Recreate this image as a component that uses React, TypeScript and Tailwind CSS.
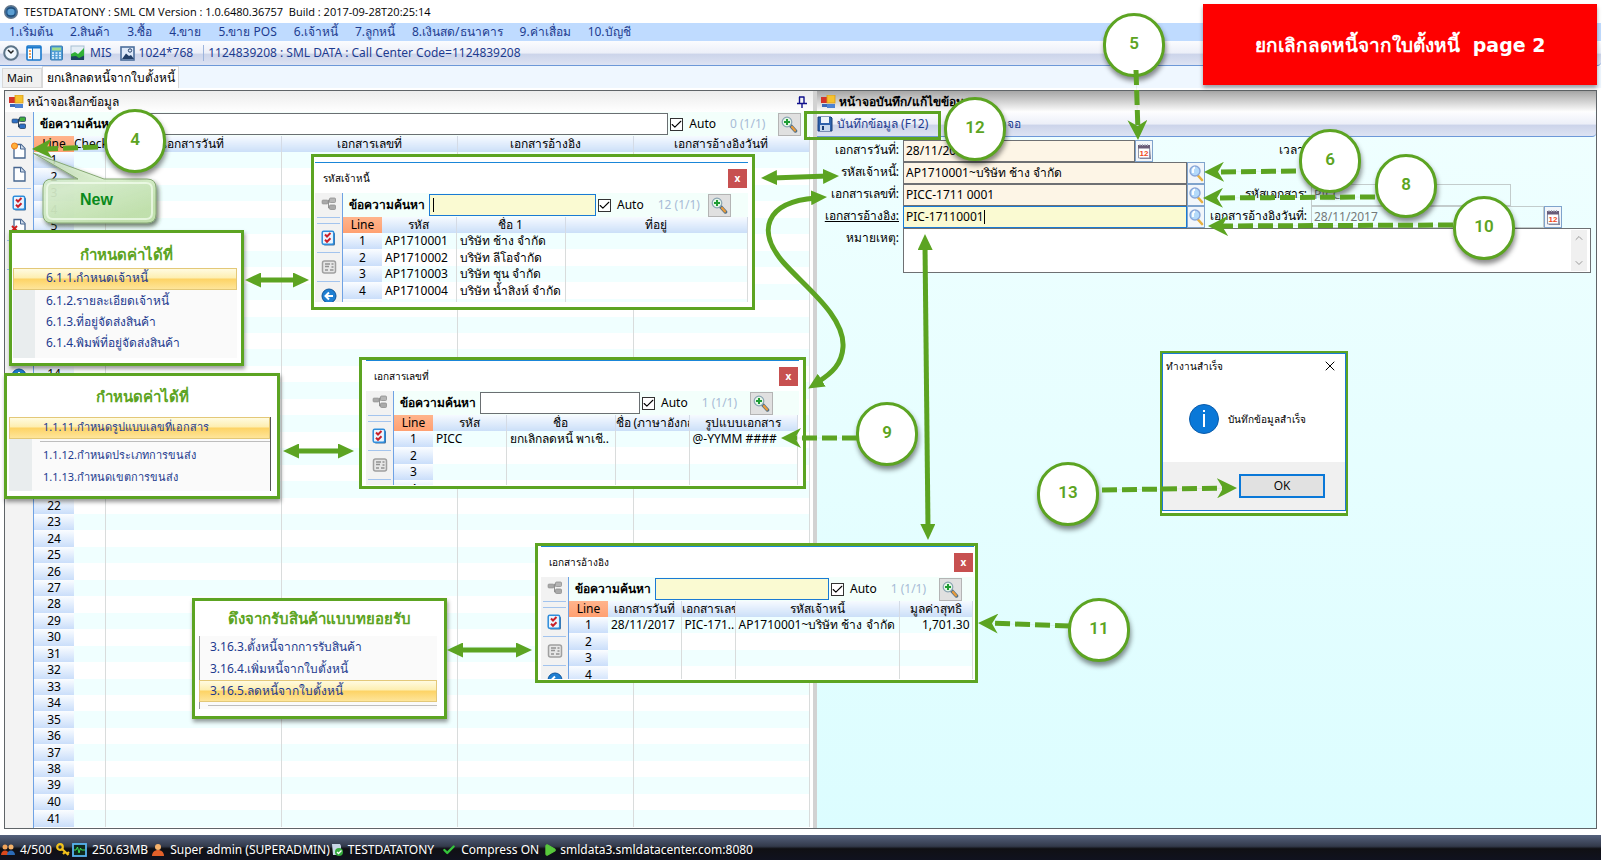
import type { ReactNode } from 'react'
import { Check, ChevronDown, ChevronUp, Play, X } from 'lucide-react'

const MENUS = ['1.เริ่มต้น', '2.สินค้า', '3.ซื้อ', '4.ขาย', '5.ขาย POS', '6.เจ้าหนี้', '7.ลูกหนี้', '8.เงินสด/ธนาคาร', '9.ค่าเสื่อม', '10.บัญชี']

type Column = { label: string; width: string; align?: string }

const MAIN_COLUMNS: Column[] = [
  { label: 'Check', width: 'w-[31px]' },
  { label: 'เอกสารวันที่', width: 'w-[176px]' },
  { label: 'เอกสารเลขที่', width: 'w-[176px]' },
  { label: 'เอกสารอ้างอิง', width: 'w-[176px]' },
  { label: 'เอกสารอ้างอิงวันที่', width: 'w-[176px]' },
]

/* ─── Icons ─── */

function TreeIcon({ muted = false }: { muted?: boolean }) {
  const a = muted ? '#a9a9a9' : '#2f6fc4'
  const b = muted ? '#b5b5b5' : '#3fae3a'
  const edge = muted ? '#8f8f8f' : '#27405f'
  return (
    <svg width="16" height="14" viewBox="0 0 16 14" aria-hidden>
      <path d="M6 5h3M7.500 5v6H10M7.500 5V3H10" stroke={edge} fill="none" />
      <rect x="1" y="3" width="6" height="4" rx="1" fill={a} stroke={edge} strokeWidth=".6" />
      <rect x="8.500" y="1" width="6" height="4.500" rx="1" fill={b} stroke={edge} strokeWidth=".8" />
      <rect x="8.500" y="8" width="6" height="4.500" rx="1" fill={a} stroke={edge} strokeWidth=".8" />
    </svg>
  )
}

function PageIcon({ mark }: { mark?: 'new' | 'delete' }) {
  return (
    <svg width="16" height="18" viewBox="0 0 16 18" aria-hidden>
      <path d="M3 2.500h7l4 4v9.500H3z" fill="#fdfeff" stroke="#46658f" strokeWidth="1.300" />
      <path d="M9.500 2.500v4.500H14" fill="#cfdcec" stroke="#46658f" />
      {mark === 'new' && <circle cx="3.500" cy="4" r="3" fill="#ffb03a" stroke="#f07a1c" />}
      {mark === 'delete' && <path d="M1 9l5 5M6 9l-5 5" stroke="#d02020" strokeWidth="2" />}
    </svg>
  )
}

function ChecklistIcon() {
  return (
    <svg width="15" height="16" viewBox="0 0 15 16" aria-hidden>
      <rect x="2.500" y="2.500" width="11.500" height="13" rx="1.500" fill="#3d6c9c" />
      <rect x="1.200" y="1.200" width="11.500" height="13" rx="1.500" fill="#eaf5ff" stroke="#2f8ddb" strokeWidth="1.500" />
      <path d="M4 4.500l2 2 3.500-3.500M4 9.800l2 2 3.500-3.500" stroke="#c9202a" strokeWidth="2" fill="none" />
    </svg>
  )
}

function CardIcon() {
  return (
    <svg width="16" height="16" viewBox="0 0 16 16" aria-hidden>
      <rect x="1.500" y="2" width="13" height="12" rx="2" fill="#e6e6e6" stroke="#a0a0a0" strokeWidth="1.500" />
      <path d="M4 5h5M4 7.500h4M10.500 5h2M10.500 8h2M4 11h3M9 11h3.500" stroke="#929292" strokeWidth="1.600" />
    </svg>
  )
}

function RoundIcon({ d }: { d: string }) {
  return (
    <svg width="16" height="16" viewBox="0 0 16 16" aria-hidden>
      <circle cx="8" cy="8" r="7" fill="#1f7fd2" stroke="#0f559c" />
      <path d={d} stroke="#fff" strokeWidth="2" fill="none" />
    </svg>
  )
}

function ZoomPlusIcon() {
  return (
    <svg width="17" height="17" viewBox="0 0 17 17" aria-hidden>
      <path d="M9 9l5.500 6" stroke="#557084" strokeWidth="3.500" strokeLinecap="round" />
      <path d="M11 11l3 3.500" stroke="#e89a3a" strokeWidth="2.200" strokeLinecap="round" />
      <circle cx="6" cy="6" r="4.800" fill="#e4f7e6" stroke="#8aa4b2" strokeWidth="1.200" />
      <path d="M3 6h6M6 3v6" stroke="#1f9c34" strokeWidth="2" />
    </svg>
  )
}

function LensIcon() {
  return (
    <svg width="16" height="18" viewBox="0 0 16 18" aria-hidden>
      <path d="M9.500 11l4.500 5" stroke="#e6b040" strokeWidth="2.600" strokeLinecap="round" />
      <circle cx="7" cy="7" r="5" fill="#b4dafa" stroke="#8aa6d8" strokeWidth="1.400" />
      <path d="M5 9V5.500a2.500 2.500 0 0 1 2-2" stroke="#fff" strokeWidth="1.800" fill="none" />
    </svg>
  )
}

function CalendarIcon() {
  return (
    <svg width="15" height="17" viewBox="0 0 15 17" aria-hidden>
      <path d="M2 3l11 1 1 12H3z" fill="#7a7f98" />
      <path d="M1.500 3.500h11v11.500h-11z" fill="#fff" stroke="#8f93a8" />
      <path d="M1 2h12v3.500H1z" fill="#6a5c78" />
      <path d="M3 1v2M5.500 1v2M8 1v2M10.500 1v2" stroke="#a5a8b8" />
      <text x="7" y="12.500" fontSize="8" fontWeight="700" textAnchor="middle" fill="#f04a1c" fontFamily="Liberation Sans, sans-serif">12</text>
    </svg>
  )
}

function FormIcon() {
  return (
    <svg width="15" height="14" viewBox="0 0 15 14" aria-hidden>
      <rect x="0" y="2" width="6" height="6" fill="#d3342b" />
      <rect x="1" y="9" width="5" height="3" fill="#3b69b8" />
      <rect x="6" y="0" width="8" height="8" fill="#f5c22f" stroke="#d89a17" strokeWidth=".8" />
      <rect x="6" y="9" width="8" height="4" fill="#4d82d4" />
    </svg>
  )
}

function SaveIcon() {
  return (
    <svg width="16" height="16" viewBox="0 0 16 16" aria-hidden>
      <path d="M1 1h13l1 1v13H1z" fill="#2f62ac" stroke="#1b3f78" />
      <rect x="4" y="1" width="8" height="6" fill="#eef4fb" />
      <rect x="3" y="9" width="10" height="6" fill="#c6d8ee" />
      <rect x="5" y="10" width="2" height="4" fill="#1b3f78" />
    </svg>
  )
}

function AppIcon() {
  return (
    <svg width="14" height="14" viewBox="0 0 14 14" aria-hidden>
      <circle cx="7" cy="7" r="6.300" fill="#2c6296" stroke="#64788c" strokeWidth="1.400" />
      <circle cx="7" cy="7" r="3.500" fill="#5c9fd2" />
      <path d="M3 4.500c2-2 6-2 8 0M3 9.500c2 2 6 2 8 0" stroke="#1d466e" fill="none" />
    </svg>
  )
}

function ClockIcon() {
  return (
    <svg width="16" height="16" viewBox="0 0 16 16" aria-hidden>
      <circle cx="8" cy="8" r="6.800" fill="#eff6fd" stroke="#5c7488" strokeWidth="2" />
      <path d="M5 5l3 3 2.500-2.500" stroke="#222" strokeWidth="1.500" fill="none" />
    </svg>
  )
}

function PanelIcon() {
  return (
    <svg width="16" height="16" viewBox="0 0 16 16" aria-hidden>
      <rect x="1" y="1" width="14" height="14" rx="1" fill="#e6f2fc" stroke="#1a78cc" strokeWidth="1.600" />
      <path d="M1 2.500h14" stroke="#1a78cc" strokeWidth="2" />
      <path d="M2 4h4v10H2z" fill="#fff" />
      <path d="M6.500 3v12" stroke="#1a78cc" />
      <path d="M3 6h2M3 9h2M3 12h2" stroke="#f08828" strokeWidth="1.700" />
    </svg>
  )
}

function CalcIcon() {
  return (
    <svg width="15" height="16" viewBox="0 0 15 16" aria-hidden>
      <rect x="1.500" y="1" width="12" height="14" rx="1" fill="#4f9cd6" stroke="#3a7db4" />
      <rect x="3" y="2.500" width="9" height="3" fill="#9fdb8d" />
      <path d="M3 8h2M6.500 8h2M10 8h2M3 10.500h2M6.500 10.500h2M10 10.500h2M3 13h2M6.500 13h2M10 13h2" stroke="#e9f5ff" strokeWidth="1.500" />
    </svg>
  )
}

function ChartIcon() {
  return (
    <svg width="16" height="16" viewBox="0 0 16 16" aria-hidden>
      <rect x="1" y="1" width="13" height="13" fill="#e4eef6" stroke="#a7bfd2" />
      <path d="M1 9l4-2 3 2 6-6v10H1z" fill="#2fb036" />
      <path d="M1 11.500l5-.5 3 2 5-2.500V15H1z" fill="#1d4460" />
    </svg>
  )
}

function PictureIcon() {
  return (
    <svg width="15" height="15" viewBox="0 0 15 15" aria-hidden>
      <rect x="1" y="1" width="13" height="13" fill="#dfeafa" stroke="#4c6e9c" strokeWidth="1.600" />
      <path d="M2 13l4-5.500 3 2.500 2-1 3 4z" fill="#233f68" />
      <circle cx="10" cy="4.500" r="1.700" fill="none" stroke="#233f68" />
    </svg>
  )
}

function PersonIcon({ twin = false }: { twin?: boolean }) {
  return (
    <svg width="14" height="14" viewBox="0 0 14 14" aria-hidden>
      {twin && (
        <>
          <circle cx="4" cy="4" r="2.500" fill="#f2a35a" />
          <path d="M0 12c0-6 8-6 8 0z" fill="#d8481c" />
        </>
      )}
      <circle cx={twin ? 10 : 7} cy="4" r={twin ? 2.5 : 3} fill="#f5b26b" />
      <path d={twin ? 'M6 12c0-6 8-6 8 0z' : 'M1 13c0-8 12-8 12 0z'} fill={twin ? '#2c6cb8' : '#e2602a'} />
    </svg>
  )
}

function KeyIcon() {
  return (
    <svg width="14" height="14" viewBox="0 0 14 14" aria-hidden>
      <circle cx="4" cy="4" r="2.800" fill="none" stroke="#f2c21c" strokeWidth="2.200" />
      <path d="M6 6l6.500 6M9 9l-2 2M11 11l2-2" stroke="#f2c21c" strokeWidth="2.200" />
    </svg>
  )
}

function MonitorIcon() {
  return (
    <svg width="15" height="14" viewBox="0 0 15 14" aria-hidden>
      <rect x="1" y="1" width="13" height="12" fill="#10291c" stroke="#58b4f0" strokeWidth="1.800" />
      <path d="M2 7h2l1.500-3 1.500 6 1.500-5 1 2h3.500" stroke="#3be05a" fill="none" />
    </svg>
  )
}

function ServerIcon() {
  return (
    <svg width="13" height="14" viewBox="0 0 13 14" aria-hidden>
      <path d="M1 1h8l1 2v9H2z" fill="#c8d6e6" />
      <circle cx="8" cy="9" r="4" fill="#35a83c" />
      <path d="M6 9l1.500 1.500L10.500 7.500" stroke="#fff" strokeWidth="1.300" fill="none" />
    </svg>
  )
}

/* ─── Shared parts ─── */

function Tool({ label, first = false, children }: { label: string; first?: boolean; children: ReactNode }) {
  return (
    <button type="button" aria-label={label} className={`flex w-full shrink-0 items-center justify-center ${first ? 'h-[21px]' : 'h-[23px]'}`}>
      {children}
    </button>
  )
}

function ToolLine() {
  return (
    <div className="flex h-1.5 shrink-0 items-center px-0.5">
      <div className="h-px w-full bg-[#a3c4ee]" />
    </div>
  )
}

function SearchRow({ id, inputClass, count, focused = false, caret = false }: {
  id: string
  inputClass: string
  count: string
  focused?: boolean
  caret?: boolean
}) {
  return (
    <div className="flex h-6 shrink-0 items-center bg-[#f3fffb]">
      <label htmlFor={id} className="w-[86px] shrink-0 whitespace-nowrap pl-1.5 text-[12px] font-bold">
        ข้อความค้นหา
      </label>
      <div className={`relative h-[22px] ${inputClass}`}>
        <input id={id} className={`h-full w-full border px-1 outline-none ${focused ? 'border-[#1a7ad4] bg-[#fafad2]' : 'border-[#6a6f72] bg-white'}`} />
        {caret && <span className="absolute left-1 top-1 h-3.5 w-px bg-black" />}
      </div>
      <label className="ml-0.5 flex items-center gap-1.5">
        <span className="relative flex">
          <input type="checkbox" defaultChecked className="peer size-[13px] appearance-none border border-[#333] bg-white" />
          <Check className="pointer-events-none absolute inset-0 hidden size-[13px] peer-checked:block" strokeWidth={2} aria-hidden />
        </span>
        Auto
      </label>
      <span className="ml-3.5 min-w-10 whitespace-nowrap text-[#a7bbd6]">{count}</span>
      <button type="button" aria-label="ค้นหา" className="ml-2 flex size-[23px] shrink-0 items-center justify-center border border-[#b4b4b4] bg-[#e0e0e0]">
        <ZoomPlusIcon />
      </button>
    </div>
  )
}

function DataTable({ columns, rows, full = false }: { columns: Column[]; rows: string[][]; full?: boolean }) {
  return (
    <table className={`table-fixed border-collapse leading-4 ${full ? 'h-full w-[775px]' : 'w-0'}`}>
      <thead>
        <tr className="h-4">
          <th className={`${full ? 'w-10' : 'w-[39px]'} bg-gradient-to-b from-[#ffb48c] to-[#ffa071] p-0 font-normal`}>Line</th>
          {columns.map((c) => (
            <th key={c.label} className={`${c.width} overflow-hidden whitespace-nowrap border-r border-[#d4dbe6] bg-gradient-to-b from-[#f6faff] to-[#cbdff8] p-0 font-normal`}>
              {c.label}
            </th>
          ))}
        </tr>
      </thead>
      <tbody>
        {rows.map((row, i) => (
          <tr key={i} className={`odd:bg-[#f0ffff] even:bg-white ${full ? '' : 'odd:h-4 even:h-[17px]'}`}>
            <td className="bg-gradient-to-b from-[#fbfdff] to-[#cadefa] p-0 text-center">{i + 1}</td>
            {columns.map((c, j) => (
              <td key={c.label} className={`overflow-hidden whitespace-nowrap border-r border-[#d9dcdc] py-0 ${c.align ?? 'pl-[3px]'}`}>
                {row[j]}
              </td>
            ))}
          </tr>
        ))}
      </tbody>
    </table>
  )
}

function Popup({ id, title, place, inset, inputClass, count, focused, caret, columns, rows }: {
  id: string
  title: string
  place: string
  inset: string
  inputClass: string
  count: string
  focused?: boolean
  caret?: boolean
  columns: Column[]
  rows: string[][]
}) {
  return (
    <section className={`absolute flex flex-col border-[3px] border-[#5ca422] bg-white ${place} ${inset}`}>
      <div className="flex h-[31px] shrink-0 items-center justify-between border-t border-[#1a86d8] pl-2 pr-px">
        <h2 className="text-[10px]">{title}</h2>
        <button type="button" aria-label="ปิด" className="flex size-[19px] items-center justify-center bg-[#c75050] text-[10px] font-bold text-white">x</button>
      </div>
      <div className="flex min-h-0 flex-1 overflow-hidden">
        <div className="flex w-7 shrink-0 flex-col border-r border-[#6fa2e4] bg-[#f2f2f2]">
          <Tool label="โครงสร้าง" first><TreeIcon muted /></Tool>
          <ToolLine />
          <ToolLine />
          <Tool label="เลือกรายการ"><ChecklistIcon /></Tool>
          <ToolLine />
          <Tool label="รายละเอียด"><CardIcon /></Tool>
          <ToolLine />
          <Tool label="ย้อนกลับ"><RoundIcon d="M12 8H5M8 4.500L4.500 8 8 11.500" /></Tool>
        </div>
        <div className="flex min-w-0 flex-1 flex-col">
          <SearchRow id={id} inputClass={inputClass} count={count} focused={focused} caret={caret} />
          <DataTable columns={columns} rows={rows} />
        </div>
      </div>
    </section>
  )
}

const HIGHLIGHT = 'border border-[#e3c878] bg-[linear-gradient(#fffbe0,#fdeeb0_45%,#fdd365_50%,#fee59a)]'

function MenuBox({ place, title, titleClass, children }: { place: string; title: string; titleClass: string; children: ReactNode }) {
  return (
    <section className={`absolute flex flex-col border-[3px] border-[#5ca422] bg-white text-[#1d3b8f] shadow-[1px_3px_4px_rgba(0,0,0,0.4)] ${place}`}>
      <h2 className={`text-center text-[15px] font-bold leading-5 text-[#5ca422] ${titleClass}`}>{title}</h2>
      {children}
    </section>
  )
}

function Step({ n, place }: { n: number; place: string }) {
  return (
    <div className={`absolute flex h-16 w-[62px] items-center justify-center rounded-full border-[3px] border-[#5ca422] bg-white pb-1 font-[Roboto,sans-serif] text-[17px] font-semibold text-[#5ca422] shadow-[1px_4px_5px_rgba(0,0,0,0.45)] ${place}`}>
      {n}
    </div>
  )
}

function Field({ id, label, value, className, icon, iconLabel, underline, focused }: {
  id: string
  label: string
  value: string
  className: string
  icon?: ReactNode
  iconLabel?: string
  underline?: boolean
  focused?: boolean
}) {
  return (
    <>
      <label htmlFor={id} className={`justify-self-end whitespace-nowrap pr-1 leading-5 ${underline ? 'underline' : ''}`}>{label}</label>
      <div className="relative flex h-[22px]">
        <input id={id} defaultValue={value} className={`h-full border px-0.5 pb-0.5 outline-none ${className}`} />
        {focused && <span className="absolute left-[81px] top-1 h-3.5 w-px bg-black" />}
        {icon && (
          <button type="button" aria-label={iconLabel} className="flex h-full w-[18px] items-center justify-center border border-[#7fa3cc] bg-[#f2f6fa]">
            {icon}
          </button>
        )}
      </div>
    </>
  )
}

/* ─── Page ─── */

function TopBars() {
  return (
    <>
      <header className="flex h-[23px] shrink-0 items-center gap-1.5 pl-1 font-['Open_Sans',sans-serif] text-[11px]">
        <AppIcon />
        <h1 className="whitespace-pre">TESTDATATONY : SML CM Version : 1.0.6480.36757  Build : 2017-09-28T20:25:14</h1>
      </header>
      <nav className="flex h-[18px] shrink-0 items-center gap-[17px] bg-[#bfdbff] pl-[9px] text-[#1d3b8f]">
        {MENUS.map((m) => <button key={m} type="button" className="whitespace-nowrap">{m}</button>)}
      </nav>
      <div className="flex h-[25px] shrink-0 items-center rounded-r border-b border-[#6c98d8] bg-[linear-gradient(#fbfcfe,#eceff8_50%,#ccd4ea_55%,#dde3f3)] pl-[3px] text-[#1d3b8f]">
        <div className="flex items-center gap-[7px]">
          <ClockIcon /><PanelIcon /><CalcIcon />
        </div>
        <button type="button" className="ml-1.5 flex items-center gap-1"><ChartIcon />MIS</button>
        <button type="button" className="ml-2 flex items-center gap-1"><PictureIcon />1024*768</button>
        <span className="ml-2.5 border-l border-[#9db4dc] pl-1">1124839208 : SML DATA : Call Center Code=1124839208</span>
      </div>
      <div className="flex h-[22px] shrink-0 items-end bg-[#eff7ff] pl-0.5">
        <button type="button" className="h-5 w-10 border border-[#d9d9d9] bg-[#f0f0f0] pr-1 text-[11px]">Main</button>
        <button type="button" className="h-[22px] w-[137px] border border-b-0 border-[#d9d9d9] bg-white">ยกเลิกลดหนี้จากใบตั้งหนี้</button>
      </div>
    </>
  )
}

function SelectPanel() {
  return (
    <section className="flex w-[808px] shrink-0 flex-col">
      <div className="flex h-[21px] shrink-0 items-center gap-[3px] bg-gradient-to-b from-[#ececec] to-white pl-1 pr-1.5">
        <FormIcon />
        <h2 className="flex-1">หน้าจอเลือกข้อมูล</h2>
        <svg width="10" height="12" viewBox="0 0 10 12" aria-hidden>
          <path d="M2.500 1v6M7 1v6M2 1h5.500M0 7.500h10M5 8v4" stroke="#10108c" strokeWidth="1.400" fill="none" />
        </svg>
      </div>
      <div className="flex min-h-0 flex-1">
        <div className="flex w-[29px] shrink-0 flex-col overflow-hidden border-r border-[#6fa2e4] bg-[#f3f3f3]">
          <Tool label="โครงสร้าง" first><TreeIcon /></Tool>
          <ToolLine />
          <Tool label="New"><PageIcon mark="new" /></Tool>
          <Tool label="เปิด"><PageIcon /></Tool>
          <ToolLine />
          <Tool label="เลือกรายการ"><ChecklistIcon /></Tool>
          <Tool label="ลบ"><PageIcon mark="delete" /></Tool>
          <ToolLine />
          <Tool label="รายละเอียด"><CardIcon /></Tool>
          <ToolLine />
          <Tool label="พิมพ์"><CardIcon /></Tool>
          <Tool label="ค้นหา"><ZoomPlusIcon /></Tool>
          <Tool label="จัดกลุ่ม"><TreeIcon /></Tool>
          <Tool label="ย้อนกลับ"><RoundIcon d="M12 8H5M8 4.500L4.500 8 8 11.500" /></Tool>
          <Tool label="เพิ่ม"><RoundIcon d="M8 4v8M4 8h8" /></Tool>
        </div>
        <div className="flex min-w-0 flex-1 flex-col bg-white">
          <div className="bg-[#f3fffb] pr-3">
            <SearchRow id="main-search" inputClass="flex-1" count="0 (1/1)" />
          </div>
          <div className="min-h-0 flex-1 pb-px">
            <DataTable full columns={MAIN_COLUMNS} rows={Array.from({ length: 41 }, () => [])} />
          </div>
        </div>
      </div>
    </section>
  )
}

function EditPanel() {
  return (
    <section className="flex min-w-0 flex-1 flex-col border-l-4 border-[#d2d2d2] bg-gradient-to-b from-[#f0ffff] to-[#dcfdff]">
      <div className="flex h-[21px] shrink-0 items-center gap-[3px] bg-gradient-to-b from-[#a6a6a6] to-white pl-1">
        <FormIcon />
        <h2 className="text-[12px] font-bold">หน้าจอบันทึก/แก้ไขข้อมูล</h2>
      </div>
      <div className="flex h-[25px] shrink-0 items-center rounded-r border-b border-[#6c98d8] bg-[linear-gradient(#fdfdff,#eceff8_50%,#ccd4ea_55%,#dde3f3)] text-[#1d3b8f]">
        <button type="button" className="flex items-center gap-1 whitespace-nowrap"><SaveIcon />บันทึกข้อมูล (F12)</button>
        <button type="button" className="ml-2.5 w-[83px] whitespace-nowrap border-l border-[#9db4dc] text-right">ปิดหน้าจอ</button>
      </div>
      <form className="grid grid-cols-[86px_302px_106px_1fr] pr-[5px] pt-[3px]">
        <Field id="doc-date" label="เอกสารวันที่:" value="28/11/2017" className="w-[232px] border-[#6e7073] bg-[#fdf5e6]" icon={<CalendarIcon />} iconLabel="ปฏิทิน" />
        <span className="justify-self-end pr-1 leading-5">เวลา:</span>
        <span />
        <div className="col-span-4 grid grid-cols-subgrid">
          <Field id="creditor" label="รหัสเจ้าหนี้:" value="AP1710001~บริษัท ช้าง จำกัด" className="w-[285px] border-[#6e7073] bg-[#fdf5e6]" icon={<LensIcon />} iconLabel="ค้นหาเจ้าหนี้" />
        </div>
        <Field id="doc-no" label="เอกสารเลขที่:" value="PICC-1711 0001" className="w-[285px] border-[#6e7073] bg-[#fdf5e6]" icon={<LensIcon />} iconLabel="ค้นหาเอกสาร" />
        <Field id="doc-code" label="รหัสเอกสาร:" value="PICC" className="w-[200px] border-[#c3cccc] bg-transparent text-[#747a7a]" />
        <Field id="ref" label="เอกสารอ้างอิง:" value="PIC-17110001" className="w-[285px] border-[#1a7ad4] bg-[#fafad2]" icon={<LensIcon />} iconLabel="ค้นหาเอกสารอ้างอิง" underline focused />
        <Field id="ref-date" label="เอกสารอ้างอิงวันที่:" value="28/11/2017" className="w-[233px] border-[#c3cccc] bg-transparent text-[#747a7a]" icon={<CalendarIcon />} iconLabel="ปฏิทิน" />
        <label htmlFor="note" className="justify-self-end pr-1 leading-5">หมายเหตุ:</label>
        <div className="relative col-span-3 h-[45px]">
          <textarea id="note" className="block h-full w-full resize-none border border-[#6e7073] bg-white outline-none" />
          <div className="absolute inset-y-0.5 right-1 flex w-4 flex-col items-center justify-between bg-[#f0f0f0] py-0.5 text-[#9a9a9a]">
            <ChevronUp className="size-3" aria-hidden />
            <ChevronDown className="size-3" aria-hidden />
          </div>
        </div>
      </form>
    </section>
  )
}

function StatusBar() {
  return (
    <footer className="flex h-[25px] shrink-0 items-center whitespace-nowrap bg-[linear-gradient(#55617c,#333a4b_45%,#101014_55%,#10121f)] pl-px pt-1 text-[12px] text-white">
      <span className="flex items-center gap-[5px]"><PersonIcon twin />4/500</span>
      <span className="ml-1 flex items-center gap-0.5"><KeyIcon /><MonitorIcon /></span>
      <span className="ml-[5px]">250.63MB</span>
      <span className="ml-[3px] flex items-center gap-[5px]"><PersonIcon />Super admin (SUPERADMIN)</span>
      <span className="ml-px flex items-center gap-1"><ServerIcon />TESTDATATONY</span>
      <span className="ml-2 flex items-center gap-[5px]"><Check className="size-3.5 text-[#35c43c]" strokeWidth={4} aria-hidden />Compress ON</span>
      <span className="ml-1 flex items-center gap-[3px]"><Play className="size-3.5 fill-[#58c83c] text-[#58c83c]" aria-hidden />smldata3.smldatacenter.com:8080</span>
    </footer>
  )
}

function Arrows() {
  return (
    <svg className="pointer-events-none absolute inset-0 h-full w-full" fill="none" stroke="#5ca422" strokeWidth="5" aria-hidden>
      <defs>
        <marker id="solid" viewBox="0 0 16 15" refX="15" refY="7.500" markerWidth="16" markerHeight="15" markerUnits="userSpaceOnUse" orient="auto-start-reverse">
          <path d="M0 0L16 7.500L0 15z" fill="#5ca422" stroke="none" />
        </marker>
        <marker id="stealth" viewBox="0 0 20 20" refX="19" refY="10" markerWidth="20" markerHeight="20" markerUnits="userSpaceOnUse" orient="auto">
          <path d="M0 0L20 10L0 20L6 10z" fill="#5ca422" stroke="none" />
        </marker>
      </defs>
      <g>
        <path d="M256 280L298 280" />
        <path d="M294 451L343 451" />
        <path d="M458 650L521 650" />
        <path d="M772 178L828 176" />
        <path d="M925 245L928 529" />
      </g>
      <g strokeWidth="0.100" markerStart="url(#solid)" markerEnd="url(#solid)">
        <path d="M246 280L308 280" />
        <path d="M284 451L353 451" />
        <path d="M448 650L531 650" />
        <path d="M762 178L838 176" />
        <path d="M925 235L928 539" />
        <path d="M826 197C764 200 755 230 783 262C805 287 845 316 843 347C842 366 830 375 809 388" />
      </g>
      <path d="M816 198C764 202 757 232 783 262C805 287 845 316 843 347C842 364 832 373 818 382" />
      <g strokeDasharray="15 5">
        <path d="M1136 70L1138 132" />
        <path d="M1296 171L1212 172" />
        <path d="M1375 197L1211 198" />
        <path d="M1453 225L1216 226" />
        <path d="M98 147L40 149" />
        <path d="M857 438L789 438" />
        <path d="M1070 626L986 623" />
        <path d="M1102 490L1229 488" />
      </g>
      <g strokeWidth="0.100" markerEnd="url(#stealth)">
        <path d="M1136 70L1138 139" />
        <path d="M1296 171L1205 172" />
        <path d="M1375 197L1204 198" />
        <path d="M1453 225L1209 226" />
        <path d="M98 147L33 149" />
        <path d="M857 438L782 438" />
        <path d="M1070 626L979 623" />
        <path d="M1102 490L1236 488" />
      </g>
    </svg>
  )
}

export default function App() {
  return (
    <div className="relative h-screen w-full overflow-hidden bg-white pr-[3px] font-['Noto_Sans','Tahoma',sans-serif] text-[12px] leading-4 text-black">
      <div className="flex h-full flex-col">
        <TopBars />
        <main className="mb-1.5 ml-1 mr-1 mt-0.5 flex min-h-0 flex-1 border border-[#5f6468]">
          <SelectPanel />
          <EditPanel />
        </main>
        <StatusBar />
      </div>

      <Popup
        id="creditor-search" title="รหัสเจ้าหนี้" place="left-[311px] top-[154px] h-[156px] w-[444px]" inset="pb-[5px] pl-px pr-1 pt-[5px]"
        inputClass="w-[167px]" count="12 (1/1)" focused caret
        columns={[{ label: 'รหัส', width: 'w-[74px]' }, { label: 'ชื่อ 1', width: 'w-[109px]' }, { label: 'ที่อยู่', width: 'w-[182px]' }]}
        rows={[['AP1710001', 'บริษัท ช้าง จำกัด'], ['AP1710002', 'บริษัท ลีโอจำกัด'], ['AP1710003', 'บริษัท ชุน จำกัด'], ['AP1710004', 'บริษัท น้ำสิงห์ จำกัด'], []]}
      />
      <Popup
        id="doc-search" title="เอกสารเลขที่" place="left-[359px] top-[357px] h-[132px] w-[447px]" inset="pb-px pl-1 pr-1"
        inputClass="w-[160px]" count="1 (1/1)"
        columns={[{ label: 'รหัส', width: 'w-[73px]' }, { label: 'ชื่อ', width: 'w-[109px]' }, { label: 'ชื่อ (ภาษาอังกฤษ)', width: 'w-[74px]' }, { label: 'รูปแบบเอกสาร', width: 'w-[108px]' }]}
        rows={[['PICC', 'ยกเลิกลดหนี้ พาเชี..', '', '@-YYMM ####'], [], [], []]}
      />
      <Popup
        id="ref-search" title="เอกสารอ้างอิง" place="left-[535px] top-[543px] h-[140px] w-[443px]" inset="pb-px pl-[3px] pr-px"
        inputClass="w-[174px]" count="1 (1/1)" focused
        columns={[{ label: 'เอกสารวันที่', width: 'w-[73px]' }, { label: 'เอกสารเลขที่', width: 'w-[54px]' }, { label: 'รหัสเจ้าหนี้', width: 'w-[164px]' }, { label: 'มูลค่าสุทธิ', width: 'w-[73px]', align: 'pr-0.5 text-right' }]}
        rows={[['28/11/2017', 'PIC-171..', 'AP1710001~บริษัท ช้าง จำกัด', '1,701.30'], [], [], []]}
      />

      <MenuBox place="left-[9px] top-[230px] h-[136px] w-[235px]" title="กำหนดค่าได้ที่" titleClass="pb-1 pt-[11px]">
        <ul className="mb-[5px] ml-px mr-1 flex-1 border-l-[22px] border-[#e9edee] bg-[#fafafa] leading-[21px]">
          <li className={`-ml-[22px] h-[22px] pl-8 leading-[18px] ${HIGHLIGHT}`}>6.1.1.กำหนดเจ้าหนี้</li>
          <li className="pl-[11px]">6.1.2.รายละเอียดเจ้าหนี้</li>
          <li className="pl-[11px]">6.1.3.ที่อยู่จัดส่งสินค้า</li>
          <li className="pl-[11px]">6.1.4.พิมพ์ที่อยู่จัดส่งสินค้า</li>
        </ul>
      </MenuBox>
      <MenuBox place="left-[4px] top-[373px] h-[126px] w-[276px]" title="กำหนดค่าได้ที่" titleClass="pb-[11px] pt-[10px]">
        <ul className="mb-[5px] ml-0.5 mr-1.5 flex-1 border-l-[23px] border-r border-[#e9edee] border-r-[#555] bg-[#fafafa] text-[11px] leading-[22px]">
          <li className={`-ml-[23px] h-[22px] pl-[33px] leading-[18px] ${HIGHLIGHT}`}>1.1.11.กำหนดรูปแบบเลขที่เอกสาร</li>
          <li className="mb-0.5 ml-2 mt-0.5 h-px bg-[#bdbdbd]" aria-hidden />
          <li className="pl-[11px]">1.1.12.กำหนดประเภทการขนส่ง</li>
          <li className="pl-[11px]">1.1.13.กำหนดเขตการขนส่ง</li>
        </ul>
      </MenuBox>
      <MenuBox place="left-[192px] top-[598px] h-[121px] w-[255px]" title="ดึงจากรับสินค้าแบบทยอยรับ" titleClass="pb-2 pt-[7px]">
        <ul className="mb-[7px] ml-1 mr-[7px] flex-1 border-l border-[#9a9a9a] bg-[#fafafa] leading-[22px]">
          <li className="pl-2.5">3.16.3.ตั้งหนี้จากการรับสินค้า</li>
          <li className="pl-2.5">3.16.4.เพิ่มหนี้จากใบตั้งหนี้</li>
          <li className={`-ml-px h-[22px] pl-2.5 leading-5 ${HIGHLIGHT}`}>3.16.5.ลดหนี้จากใบตั้งหนี้</li>
          <li className="ml-2 mt-[3px] h-px bg-[#bdbdbd]" aria-hidden />
        </ul>
      </MenuBox>

      <section role="dialog" aria-label="ทำงานสำเร็จ" className="absolute left-[1160px] top-[351px] flex h-[165px] w-[188px] flex-col border-2 border-b-[3px] border-[#5ca422] bg-white pb-0.5">
        <div className="flex flex-1 flex-col border border-[#1a7ad4]">
          <div className="flex h-[23px] items-center justify-between pl-[3px] pr-[7px]">
            <h2 className="text-[10px]">ทำงานสำเร็จ</h2>
            <button type="button" aria-label="ปิด"><X className="size-4" strokeWidth={1.5} aria-hidden /></button>
          </div>
          <div className="flex flex-1 items-center gap-[9px] pb-px pl-[26px]">
            <svg width="30" height="30" viewBox="0 0 30 30" aria-hidden>
              <circle cx="15" cy="15" r="14.500" fill="#0a78d8" stroke="#0b5cab" />
              <path d="M15 10v13M15 6v2" stroke="#fff" strokeWidth="2" />
            </svg>
            <p className="text-[10px]">บันทึกข้อมูลสำเร็จ</p>
          </div>
          <div className="flex h-12 items-center justify-end bg-[#f0f0f0] pr-5">
            <button type="button" className="h-6 w-[86px] border-2 border-[#0a78d8] bg-[#e1e1e1] font-['Open_Sans',sans-serif]">OK</button>
          </div>
        </div>
      </section>

      <div className="absolute left-[804px] top-[111px] h-[29px] w-[137px] border-[3px] border-[#5ca422]" />
      <div className="absolute left-[1203px] top-1 flex h-[81px] w-[394px] items-center justify-center whitespace-pre bg-[#fe0000] font-['DejaVu_Sans',sans-serif] text-[19px] font-bold text-white shadow-[0_3px_4px_rgba(0,0,0,0.35)]">
        ยกเลิกลดหนี้จากใบตั้งหนี้  page 2
      </div>

      <svg className="absolute left-7 top-[148px] h-[84px] w-[140px]" viewBox="0 0 140 84" aria-hidden>
        <defs>
          <linearGradient id="bubble" x1="0" y1="0" x2="0.6" y2="1">
            <stop offset="0" stopColor="#c4dfb6" stopOpacity=".8" />
            <stop offset=".5" stopColor="#dcf3d0" stopOpacity=".85" />
            <stop offset="1" stopColor="#c2e3ae" stopOpacity=".95" />
          </linearGradient>
          <filter id="drop"><feDropShadow dx="2" dy="3" stdDeviation="2" floodColor="#2c3c20" floodOpacity=".7" /></filter>
        </defs>
        <path d="M5 5L76 31H119Q128 31 128 40V66Q128 75 119 75H24Q15 75 15 66V40Q15 31 24 31H50Z" fill="url(#bubble)" stroke="#86a874" filter="url(#drop)" />
        <path d="M24 35H118Q124 35 124 41V65Q124 71 118 71H25Q19 71 19 65V41Q19 35 24 35Z" stroke="#f4fdef" strokeWidth="2" fill="none" opacity=".7" />
      </svg>
      <p className="absolute left-[80px] top-[190px] font-['Liberation_Sans',sans-serif] text-[16px] font-bold leading-5 text-[#0a8a1c]">New</p>

      <Step n={4} place="left-[104px] top-[109px]" />
      <Step n={5} place="left-[1103px] top-[13px]" />
      <Step n={6} place="left-[1299px] top-[129px]" />
      <Step n={8} place="left-[1375px] top-[154px]" />
      <Step n={9} place="left-[856px] top-[402px]" />
      <Step n={10} place="left-[1453px] top-[196px]" />
      <Step n={11} place="left-[1068px] top-[598px]" />
      <Step n={12} place="left-[944px] top-[97px]" />
      <Step n={13} place="left-[1037px] top-[462px]" />
      <Arrows />
    </div>
  )
}
